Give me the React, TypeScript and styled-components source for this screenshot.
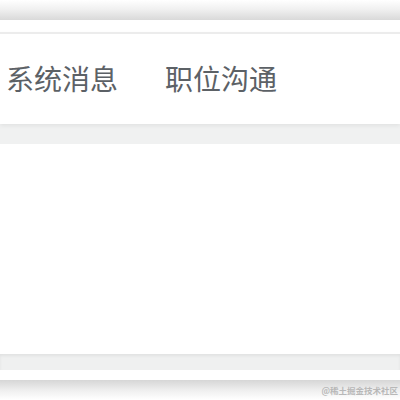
import React from 'react';
import styled, {createGlobalStyle} from "styled-components";

const GlobalStyle = createGlobalStyle`
	html, body {
	  margin: 0;
	  padding: 0;
	  background: #fff;
	}
	body {
	  font-family: "Noto Sans CJK SC", "Noto Sans", sans-serif;
	}
`;

const Page = styled.div`
	width: 400px;
  	height: 400px;
  	overflow: hidden;
  	display: flex;
  	flex-direction: column;
  	background: #fff;
  	position: relative;
`;

const TopFade = styled.div`
	height: 20px;
  	background: linear-gradient(to bottom, #ffffff 0%, #f1f1f1 45%, #d9d9d9 100%);
`;

const Spacer = styled.div<{h:number}>`
	height: ${p => p.h}px;
  	background: #fff;
`;

const TabPanel = styled.div`
	height: 92px;
  	box-sizing: border-box;
  	border-top: 2px solid #ececec;
  	background: #fff;
  	display: flex;
  	align-items: center;
  	padding: 0 0 2px 6px;
  	gap: 47px;
  	box-shadow: 0 2px 4px rgba(0,0,0,0.06);
  	position: relative;
  	z-index: 1;
`;

const TabItem = styled.span`
	font-size: 28px;
  	font-weight: 400;
  	line-height: 1;
  	color: #5c6166;
`;

const GreyBand = styled.div<{h:number}>`
	height: ${p => p.h}px;
  	background: #f0f1f1;
`;

const ContentArea = styled.div`
	height: 210px;
  	background: #fff;
`;

const LowerBand = styled.div`
	height: 16px;
  	background: #eff0f0;
  	box-shadow: inset 0 2px 3px rgba(0,0,0,0.06);
`;

const BottomFade = styled.div`
	height: 20px;
  	background: linear-gradient(to bottom, #d6d6d6 0%, #eeeeee 50%, #ffffff 100%);
`;

const Watermark = styled.span`
	position: absolute;
  	right: 2px;
  	bottom: 4px;
  	font-size: 8.5px;
  	font-weight: 700;
  	color: #b8b8b8;
  	font-family: "Noto Sans CJK SC", sans-serif;
`;

const App:React.FC = () => {
	return (
		<Page>
			<GlobalStyle/>
			<TopFade/>
			<Spacer h={12}/>
			<TabPanel>
				<TabItem>系统消息</TabItem>
				<TabItem>职位沟通</TabItem>
			</TabPanel>
			<GreyBand h={20}/>
			<ContentArea/>
			<LowerBand/>
			<Spacer h={10}/>
			<BottomFade/>
			<Watermark>@稀土掘金技术社区</Watermark>
		</Page>
	);
};

export default App;
